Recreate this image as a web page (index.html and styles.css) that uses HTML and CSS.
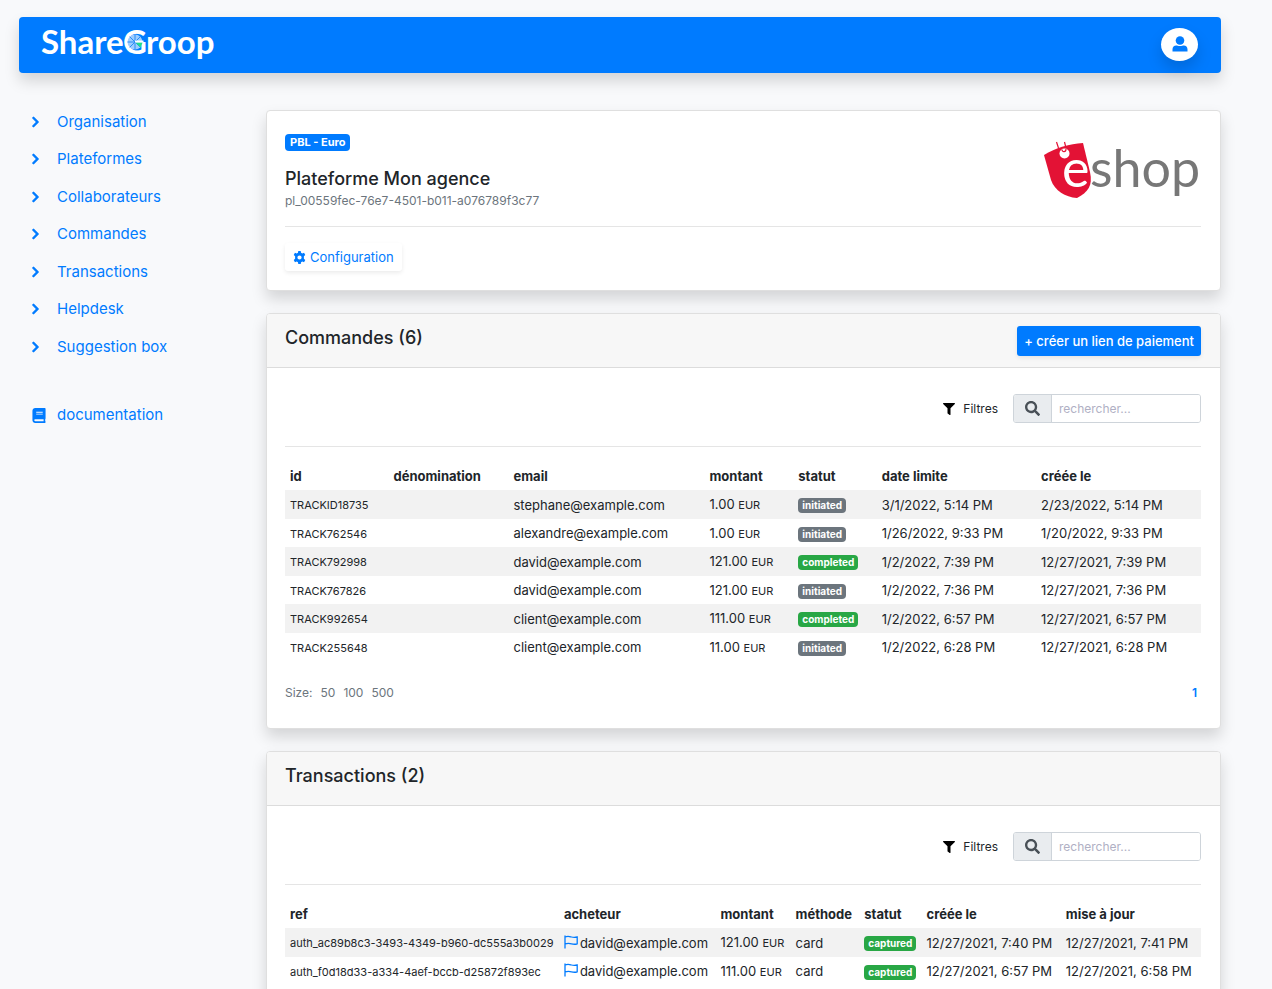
FILE: index.html
```html
<!DOCTYPE html>
<html lang="fr">
<head>
<meta charset="utf-8">
<title>ShareGroop</title>
<link rel="stylesheet" href="styles.css">
</head>
<body>
<svg class="defs" aria-hidden="true">
  <symbol id="chevron" viewBox="0 0 320 512"><path d="M285.476 272.971L91.132 467.314c-9.373 9.373-24.569 9.373-33.941 0l-22.667-22.667c-9.357-9.357-9.375-24.522-.04-33.901L188.505 256 34.484 101.255c-9.335-9.379-9.317-24.544.04-33.901l22.667-22.667c9.373-9.373 24.569-9.373 33.941 0L285.475 239.03c9.373 9.372 9.373 24.568.001 33.941z" stroke="#007bff" stroke-width="24"/></symbol>
  <symbol id="book" viewBox="0 0 448 512"><path d="M448 360V24c0-13.300-10.700-24-24-24H96C43 0 0 43 0 96v320c0 53 43 96 96 96h328c13.300 0 24-10.700 24-24v-16c0-7.500-3.500-14.300-8.900-18.700-4.200-15.400-4.200-59.300 0-74.700 5.400-4.300 8.900-11.100 8.900-18.600zM128 134c0-3.300 2.700-6 6-6h212c3.300 0 6 2.700 6 6v20c0 3.300-2.700 6-6 6H134c-3.300 0-6-2.700-6-6v-20zm0 64c0-3.300 2.700-6 6-6h212c3.300 0 6 2.700 6 6v20c0 3.300-2.700 6-6 6H134c-3.300 0-6-2.700-6-6v-20zm253.400 250H96c-17.700 0-32-14.300-32-32 0-17.600 14.400-32 32-32h285.400c-1.900 17.100-1.900 46.900 0 64z"/></symbol>
  <symbol id="filter" viewBox="0 0 512 512"><path d="M487.976 0H24.028C2.710 0-8.047 25.866 7.058 40.971L192 225.941V432c0 7.831 3.821 15.170 10.237 19.662l80 55.980C298.020 518.690 320 507.493 320 487.980V225.941l184.947-184.970C520.021 25.896 509.338 0 487.976 0z"/></symbol>
  <symbol id="search" viewBox="0 0 512 512"><path d="M505 442.700L405.300 343c-4.500-4.500-10.600-7-17-7H372c27.600-35.300 44-79.700 44-128C416 93.100 322.900 0 208 0S0 93.100 0 208s93.100 208 208 208c48.300 0 92.700-16.400 128-44v16.300c0 6.400 2.500 12.500 7 17l99.700 99.700c9.400 9.400 24.600 9.400 33.900 0l28.300-28.300c9.400-9.400 9.400-24.600.1-34zM208 336c-70.700 0-128-57.200-128-128 0-70.700 57.200-128 128-128 70.700 0 128 57.200 128 128 0 70.700-57.200 128-128 128z"/></symbol>
  <symbol id="flag" viewBox="0 0 14 14"><path d="M1 .5v13M1 2c3-1.400 4.500-.6 6.500 0s3.500.6 5.700 0v6.800c-2.200.8-3.700.6-5.700 0s-3.500-1-6.500.2" fill="none" stroke="currentColor" stroke-width="1.300"/></symbol>
</svg>
<div class="page">
  <header class="topbar">
    <a class="brand" href="#" aria-label="ShareGroop">
      <svg width="180" height="48" viewBox="0 0 180 48">
        <g class="brand-text"><text x="0" y="34">Share</text><text x="82" y="34">G</text><text x="105" y="34">roop</text></g>
        <circle cx="94" cy="22" r="7.500" fill="#9ccdff"/>
        <path d="M94 14.500v15M86.500 22H94M88.700 16.700l10.600 10.600M88.700 27.300l10.600-10.600" stroke="#2b8cf5" stroke-width="1"/>
        <path d="M94.500 22.500h7l-2 5z" fill="#1fe08c"/>
        <path d="M94 21.500h8.500" fill="none" stroke="#fff" stroke-width="2"/>
      </svg>
    </a>
    <button class="avatar" type="button" aria-label="Compte">
      <svg width="16" height="16" viewBox="0 0 16 16" fill="currentColor"><circle cx="8" cy="4.500" r="4.300"/><path d="M.5 15.500v-2.200C.5 11 2 9.500 4.200 9.500c1 0 2 .6 3.800.6s2.800-.6 3.800-.6c2.200 0 3.700 1.500 3.700 3.800v2.200z"/></svg>
    </button>
  </header>
  <div class="columns">
    <nav class="side">
      <ul class="menu">
        <li><a href="#"><svg class="chev"><use href="#chevron"/></svg>Organisation</a></li>
        <li><a href="#"><svg class="chev"><use href="#chevron"/></svg>Plateformes</a></li>
        <li><a href="#"><svg class="chev"><use href="#chevron"/></svg>Collaborateurs</a></li>
        <li><a href="#"><svg class="chev"><use href="#chevron"/></svg>Commandes</a></li>
        <li><a href="#"><svg class="chev"><use href="#chevron"/></svg>Transactions</a></li>
        <li><a href="#"><svg class="chev"><use href="#chevron"/></svg>Helpdesk</a></li>
        <li><a href="#"><svg class="chev"><use href="#chevron"/></svg>Suggestion box</a></li>
      </ul>
      <a class="docs" href="#"><svg class="book"><use href="#book"/></svg>documentation</a>
    </nav>
    <main class="content">
      <section class="card platform">
        <div class="platform-top">
          <div>
            <span class="badge badge-blue">PBL - Euro</span>
            <h1 class="title">Plateforme Mon agence</h1>
            <p class="ident">pl_00559fec-76e7-4501-b011-a076789f3c77</p>
          </div>
          <svg class="shop" width="160" height="72" viewBox="0 -5 160 72" role="img" aria-label="eshop">
            <path d="M3 16C16 8 28 5 42 4l7 29c3 14-2 20-13 26C24 58 14 52 10 41z" fill="#e31235"/>
            <path d="M15.500 3l2 6M23.500 3l1.500 6" stroke="#e31235" stroke-width="1.200"/>
            <circle cx="23.500" cy="14.500" r="5" fill="#fff"/>
            <path d="M21 10.500c0 3 4 3 4-.5" fill="none" stroke="#e31235" stroke-width="1.200"/>
            <text class="shop-e" x="21" y="48">e</text>
            <text class="shop-text" x="49" y="48">shop</text>
          </svg>
        </div>
        <hr class="rule">
        <button class="config" type="button"><svg width="13" height="13" viewBox="0 0 16 16"><path fill-rule="evenodd" fill="currentColor" d="M6.500 0h3l.4 2.200 1.500.9 2.200-.8 1.500 2.700L13.400 6.500v3l1.700 1.500-1.500 2.700-2.200-.8-1.500.9-.4 2.200h-3l-.4-2.200-1.500-.9-2.200.8L.9 11l1.700-1.500v-3L.9 5l1.500-2.700 2.200.8 1.500-.9zM8 5.400a2.600 2.600 0 100 5.200 2.600 2.600 0 000-5.200z"/></svg>Configuration</button>
      </section>

      <section class="card">
        <div class="card-head"><h2 class="title">Commandes (6)</h2><button class="create" type="button">+ créer un lien de paiement</button></div>
        <div class="card-body">
          <div class="tools">
            <button class="filters" type="button"><svg width="12" height="12"><use href="#filter"/></svg>Filtres</button>
            <div class="search"><label for="s1" aria-label="rechercher"><svg width="15" height="15"><use href="#search"/></svg></label><input id="s1" type="text" placeholder="rechercher..."></div>
          </div>
          <hr class="rule">
          <table class="grid orders">
            <thead><tr><th>id</th><th>dénomination</th><th>email</th><th>montant</th><th>statut</th><th>date limite</th><th>créée le</th></tr></thead>
            <tbody>
              <tr><td><small>TRACKID18735</small></td><td></td><td>stephane@example.com</td><td>1.00 <small>EUR</small></td><td><span class="badge badge-grey">initiated</span></td><td>3/1/2022, 5:14 PM</td><td>2/23/2022, 5:14 PM</td></tr>
              <tr><td><small>TRACK762546</small></td><td></td><td>alexandre@example.com</td><td>1.00 <small>EUR</small></td><td><span class="badge badge-grey">initiated</span></td><td>1/26/2022, 9:33 PM</td><td>1/20/2022, 9:33 PM</td></tr>
              <tr><td><small>TRACK792998</small></td><td></td><td>david@example.com</td><td>121.00 <small>EUR</small></td><td><span class="badge badge-green">completed</span></td><td>1/2/2022, 7:39 PM</td><td>12/27/2021, 7:39 PM</td></tr>
              <tr><td><small>TRACK767826</small></td><td></td><td>david@example.com</td><td>121.00 <small>EUR</small></td><td><span class="badge badge-grey">initiated</span></td><td>1/2/2022, 7:36 PM</td><td>12/27/2021, 7:36 PM</td></tr>
              <tr><td><small>TRACK992654</small></td><td></td><td>client@example.com</td><td>111.00 <small>EUR</small></td><td><span class="badge badge-green">completed</span></td><td>1/2/2022, 6:57 PM</td><td>12/27/2021, 6:57 PM</td></tr>
              <tr><td><small>TRACK255648</small></td><td></td><td>client@example.com</td><td>11.00 <small>EUR</small></td><td><span class="badge badge-grey">initiated</span></td><td>1/2/2022, 6:28 PM</td><td>12/27/2021, 6:28 PM</td></tr>
            </tbody>
          </table>
          <div class="pager"><div class="sizes"><span>Size:</span><a href="#">50</a><a href="#">100</a><a href="#">500</a></div><a class="current" href="#">1</a></div>
        </div>
      </section>

      <section class="card">
        <div class="card-head"><h2 class="title">Transactions (2)</h2></div>
        <div class="card-body">
          <div class="tools">
            <button class="filters" type="button"><svg width="12" height="12"><use href="#filter"/></svg>Filtres</button>
            <div class="search"><label for="s2" aria-label="rechercher"><svg width="15" height="15"><use href="#search"/></svg></label><input id="s2" type="text" placeholder="rechercher..."></div>
          </div>
          <hr class="rule">
          <table class="grid payments">
            <thead><tr><th>ref</th><th>acheteur</th><th>montant</th><th>méthode</th><th>statut</th><th>créée le</th><th>mise à jour</th></tr></thead>
            <tbody>
              <tr><td><small>auth_ac89b8c3-3493-4349-b960-dc555a3b0029</small></td><td><svg class="flag"><use href="#flag"/></svg>david@example.com</td><td>121.00 <small>EUR</small></td><td>card</td><td><span class="badge badge-green">captured</span></td><td>12/27/2021, 7:40 PM</td><td>12/27/2021, 7:41 PM</td></tr>
              <tr><td><small>auth_f0d18d33-a334-4aef-bccb-d25872f893ec</small></td><td><svg class="flag"><use href="#flag"/></svg>david@example.com</td><td>111.00 <small>EUR</small></td><td>card</td><td><span class="badge badge-green">captured</span></td><td>12/27/2021, 6:57 PM</td><td>12/27/2021, 6:58 PM</td></tr>
            </tbody>
          </table>
        </div>
      </section>
    </main>
  </div>
</div>
</body>
</html>
```
FILE: styles.css
```css
* { box-sizing: border-box; }
body {
  margin: 0;
  height: 100vh;
  overflow: hidden;
  background: #f8f9fb;
  color: #212529;
  font: 13px/20px Inter, "Liberation Sans", sans-serif;
}
a { color: #007bff; text-decoration: none; }
button { font: inherit; border: 0; cursor: pointer; }
.defs { display: none; }
.page { padding: 17px 51px 0 19px; }

.topbar {
  display: flex;
  align-items: center;
  justify-content: space-between;
  height: 56px;
  padding: 0 23px 2px 22px;
  border-radius: 4px;
  background: #007bff;
  box-shadow: 0 8px 15px rgba(0, 0, 0, .15);
}
.brand, .brand svg { display: block; }
.brand-text { font: 700 33px Lato, sans-serif; fill: #fff; }
.avatar {
  display: flex;
  align-items: center;
  justify-content: center;
  width: 37px;
  height: 33px;
  padding: 0;
  border-radius: 50%;
  background: #fff;
  color: #007bff;
  box-shadow: 0 8px 15px rgba(0, 0, 0, .15);
}

.columns { display: flex; margin-top: 37px; }
.side { flex: 0 0 247px; padding: 1px 0 0 12px; font-size: 15px; line-height: 22px; }
.menu { margin: 0; padding: 0; list-style: none; }
.menu li { height: 37px; }
.menu li:nth-child(even) { height: 38px; }
.side a { display: flex; align-items: center; }
.chev { width: 9px; height: 12px; margin-right: 17px; fill: #007bff; }
.book { width: 14px; height: 15px; margin: 0 11px 0 1px; fill: #007bff; }
.docs { margin-top: 31px; }

.content { flex: 1; min-width: 0; display: flex; flex-direction: column; gap: 22px; }
.card {
  border: 1px solid #dfdfdf;
  border-radius: 4px;
  background: #fff;
  box-shadow: 0 8px 15px rgba(0, 0, 0, .15);
}
.title { margin: 0; font-size: 18px; line-height: 24px; font-weight: 500; }
.rule { margin: 0; border: 0; border-top: 1px solid #e5e5e5; }
.badge {
  display: inline-block;
  padding: 2px 4px;
  border-radius: 4px;
  color: #fff;
  font-size: 10px;
  line-height: 11px;
  font-weight: 700;
  vertical-align: middle;
}
.badge-blue { display: block; width: fit-content; padding: 3px 5px; font-size: 11px; background: #007bff; }
.badge-grey { background: #6c757d; }
.badge-green { background: #28a745; }

.platform { padding: 23px 19px 19px 18px; }
.platform-top { display: flex; justify-content: space-between; height: 92px; }
.platform .title { margin-top: 16px; }
.ident { margin: 0; color: #6c757d; font-size: 12px; line-height: 20px; }
.shop-text, .shop-e { font: 400 52px Lato, sans-serif; fill: #777; }
.shop-e { fill: #fff; }
.config {
  display: flex;
  align-items: center;
  gap: 4px;
  margin-top: 16px;
  padding: 4px 8px;
  border-radius: 3px;
  background: #fff;
  color: #007bff;
  box-shadow: 0 2px 4px rgba(0, 0, 0, .08);
}

.card-head {
  display: flex;
  justify-content: space-between;
  align-items: flex-start;
  height: 54px;
  padding: 12px 19px 12px 18px;
  border-bottom: 1px solid #dcdcdc;
  border-radius: 3px 3px 0 0;
  background: #f7f7f7;
}
.create {
  padding: 5px 7px;
  border-radius: 3px;
  background: #007bff;
  color: #fff;
  font-weight: 500;
  box-shadow: 0 2px 4px rgba(0, 0, 0, .08);
}
.card-body { padding: 26px 19px 25px 18px; }
.tools { display: flex; justify-content: flex-end; align-items: center; gap: 15px; margin-bottom: 23px; }
.filters { display: flex; align-items: center; gap: 8px; padding: 0; background: none; color: #212529; font-size: 12px; }
.search { display: flex; width: 188px; height: 29px; border: 1px solid #ced4da; border-radius: 3px; overflow: hidden; }
.search label {
  display: flex;
  align-items: center;
  justify-content: center;
  width: 38px;
  border-right: 1px solid #ced4da;
  background: #e9ecef;
  fill: #495057;
}
.search input { flex: 1; min-width: 0; padding: 0 7px; border: 0; font: inherit; font-size: 12px; }
.search input::placeholder { color: #b0b0c4; opacity: 1; }

.grid { width: 100%; margin-top: 15px; border-collapse: collapse; table-layout: fixed; }
.grid th, .grid td { height: 28px; padding: 0 0 0 5px; text-align: left; white-space: nowrap; }
.grid th { font-weight: 700; }
.grid small { font-size: 11px; }
.grid tbody tr:nth-child(odd) { background: #f2f2f2; }
.grid tbody tr:nth-child(odd) td { height: 29px; }
.orders th:nth-child(1) { width: 11.3%; }
.orders th:nth-child(2) { width: 13.1%; }
.orders th:nth-child(3) { width: 21.4%; }
.orders th:nth-child(4) { width: 9.7%; }
.orders th:nth-child(5) { width: 9.1%; }
.orders th:nth-child(6) { width: 17.4%; }
.payments th:nth-child(1) { width: 29.9%; }
.payments th:nth-child(2) { width: 17.1%; }
.payments th:nth-child(3) { width: 8.2%; }
.payments th:nth-child(4) { width: 7.5%; }
.payments th:nth-child(5) { width: 6.8%; }
.payments th:nth-child(6) { width: 15.2%; }
.flag { width: 14px; height: 14px; margin-right: 2px; color: #007bff; vertical-align: -1px; }

.pager { display: flex; justify-content: space-between; margin-top: 22px; padding-right: 4px; }
.sizes { display: flex; gap: 8px; color: #6c757d; font-size: 12px; }
.sizes a { color: inherit; }
.current { font-size: 12px; font-weight: 600; }
```
